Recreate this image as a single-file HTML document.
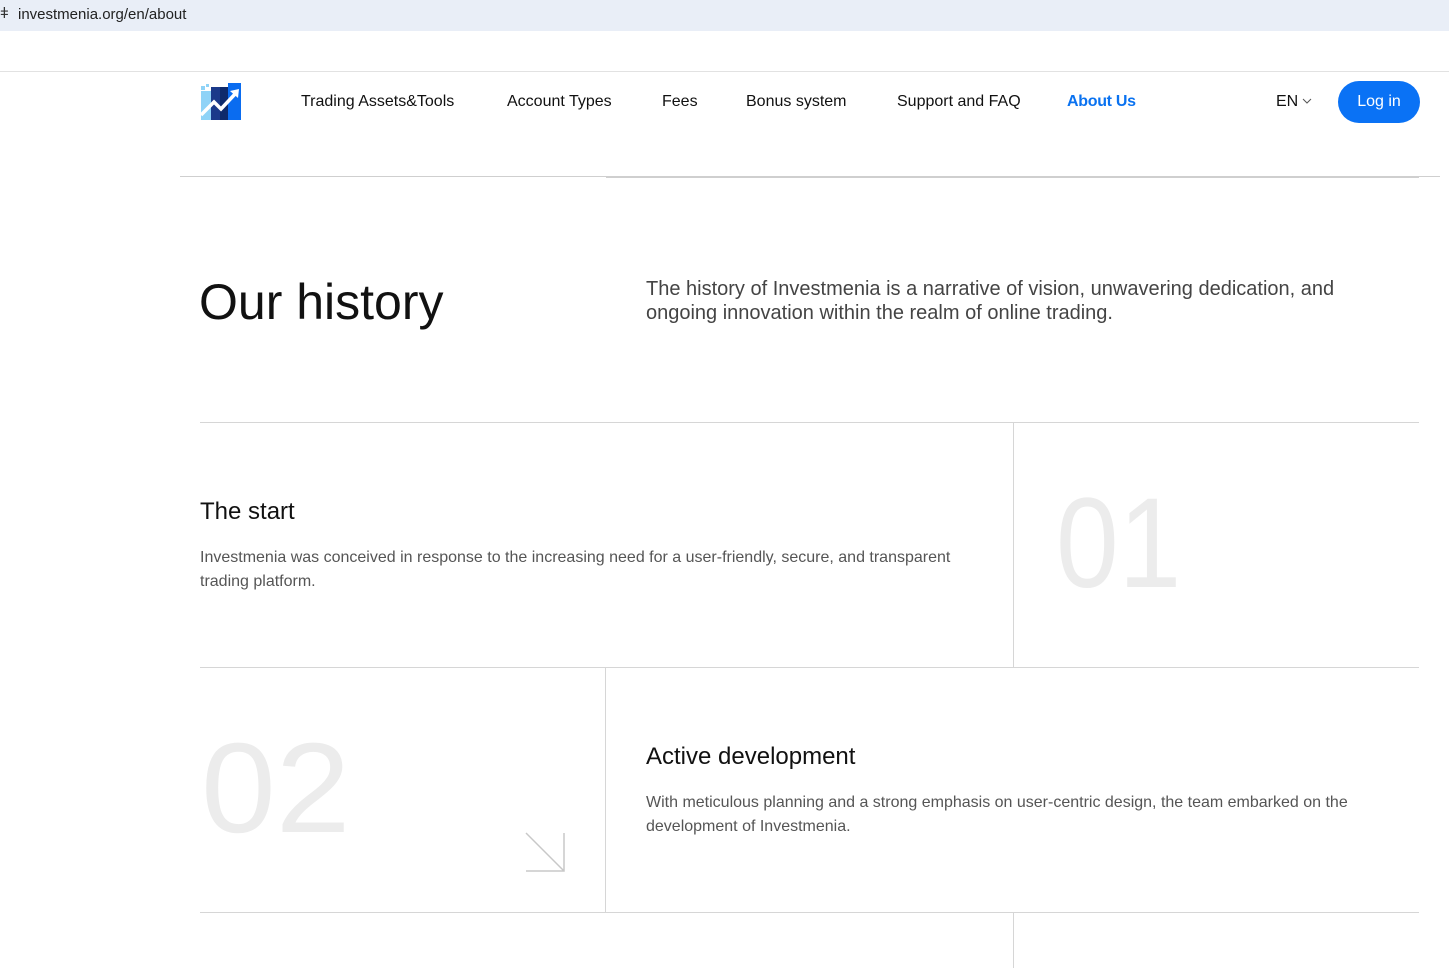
<!DOCTYPE html>
<html><head><meta charset="utf-8"><style>
*{margin:0;padding:0;box-sizing:border-box}
body{width:1449px;height:968px;overflow:hidden;background:#fff;font-family:"Liberation Sans",sans-serif;color:#111;position:relative}
.a{position:absolute}
.nav{font-size:16px;color:#111;top:93px}
.v{background:#d6d6d6;width:1px}
.h{background:#d6d6d6;height:1px}
.num{font-size:128px;color:#ececec;transform-origin:left top}
</style></head><body>
<div class="a" style="left:0;top:0;width:1449px;height:31px;background:#e9eef7"></div>
<div class="a" style="left:0;top:5px;font-size:15px;color:#333">ǂ</div>
<div class="a" style="left:18px;top:6px;font-size:15px;color:#222">investmenia.org/en/about</div>
<div class="a h" style="left:0;top:71px;width:1449px;background:#e2e2e2"></div>
<svg class="a" style="left:200px;top:83px" width="41" height="37" viewBox="0 0 41 37">
<rect x="1" y="3" width="4" height="4" fill="#8fd3f7"/><rect x="6" y="1" width="3" height="3" fill="#8fd3f7"/>
<rect x="1" y="8" width="11" height="29" fill="#8fd3f7"/>
<rect x="11" y="4" width="9" height="33" fill="#1b3a8a"/>
<rect x="20" y="4" width="9" height="33" fill="#0e2a6b"/>
<rect x="28" y="0" width="13" height="37" fill="#0a6cf0"/>
<path d="M1 32 L14 19 L21 26 L36 10" stroke="#fff" stroke-width="3.5" fill="none"/>
<path d="M30 8 L39 6 L38 15 Z" fill="#fff"/>
</svg>
<div class="a nav" style="left:301px">Trading Assets&amp;Tools</div>
<div class="a nav" style="left:507px">Account Types</div>
<div class="a nav" style="left:662px">Fees</div>
<div class="a nav" style="left:746px">Bonus system</div>
<div class="a nav" style="left:897px">Support and FAQ</div>
<div class="a nav" style="left:1067px;color:#0a72f0;font-weight:bold;letter-spacing:-0.3px">About Us</div>
<div class="a nav" style="left:1276px">EN</div>
<svg class="a" style="left:1302px;top:98px" width="10" height="7"><path d="M1 1 L5 5 L9 1" stroke="#555" fill="none"/></svg>
<div class="a" style="left:1338px;top:81px;width:82px;height:42px;border-radius:21px;background:#0a72f5;color:#fff;font-size:16px;text-align:center;line-height:42px">Log in</div>
<div class="a h" style="left:180px;top:176px;width:1260px;background:#cfcfcf"></div>
<div class="a h" style="left:606px;top:177px;width:813px;background:#cfcfcf"></div>
<div class="a" style="left:199px;top:273px;font-size:50px;color:#111">Our history</div>
<div class="a" style="left:646px;top:277px;width:720px;font-size:20px;line-height:24px;color:#444">The history of Investmenia is a narrative of vision, unwavering dedication, and ongoing innovation within the realm of online trading.</div>
<div class="a h" style="left:200px;top:422px;width:1219px"></div>
<div class="a v" style="left:1013px;top:422px;height:245px"></div>
<div class="a" style="left:200px;top:498px;font-size:24px">The start</div>
<div class="a" style="left:200px;top:546px;width:780px;font-size:16px;line-height:24px;color:#555">Investmenia was conceived in response to the increasing need for a user-friendly, secure, and transparent trading platform.</div>
<div class="a num" style="left:1056px;top:470px;transform:scaleX(0.88)">01</div>
<div class="a h" style="left:200px;top:667px;width:1219px"></div>
<div class="a v" style="left:605px;top:667px;height:245px"></div>
<div class="a num" style="left:201px;top:715px;transform:scaleX(1.05)">02</div>
<svg class="a" style="left:524px;top:831px" width="42" height="42"><path d="M2 2 L40 40 M40 2 L40 40 L2 40" stroke="#c8c8c8" stroke-width="1.5" fill="none"/></svg>
<div class="a" style="left:646px;top:743px;font-size:24px">Active development</div>
<div class="a" style="left:646px;top:791px;width:740px;font-size:16px;line-height:24px;color:#555">With meticulous planning and a strong emphasis on user-centric design, the team embarked on the development of Investmenia.</div>
<div class="a h" style="left:200px;top:912px;width:1219px"></div>
<div class="a v" style="left:1013px;top:912px;height:56px"></div>
</body></html>
